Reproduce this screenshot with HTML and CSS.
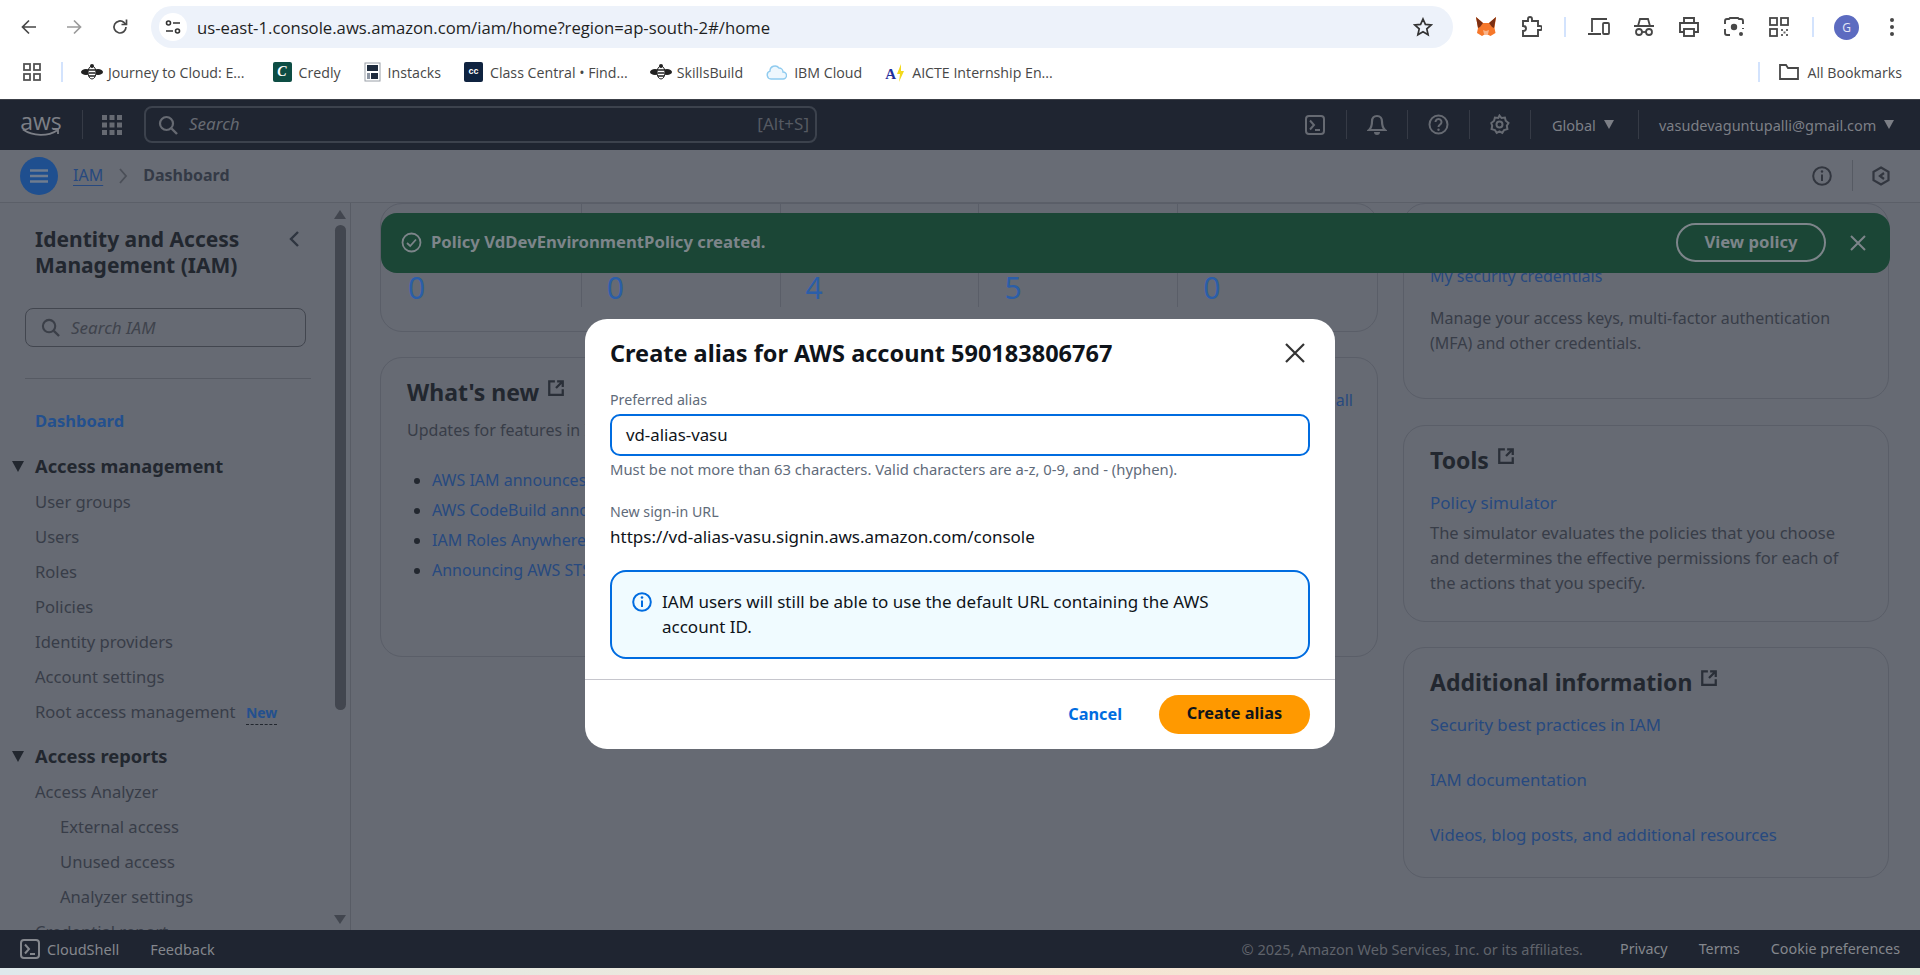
FILE: index.html
```html
<!DOCTYPE html>
<html lang="en">
<head>
    <meta charset="UTF-8">
    <meta name="viewport" content="width=device-width, initial-scale=1.0">
    <title>IAM Dashboard</title>
    <link rel="stylesheet" href="styles.css">
</head>
<body>

    <svg class="defs" width="0" height="0">
        <symbol id="ext" viewBox="0 0 16 16"><path d="M7 2H2v12h12V9M9 2h5v5M14 2L8 8" fill="none" stroke="currentColor" stroke-width="2"/></symbol>
        <symbol id="shell" viewBox="0 0 20 20"><rect x="1" y="1" width="18" height="18" rx="3" fill="none" stroke="currentColor" stroke-width="2"/><path d="M5 5.5l4 4.5-4 4.5M10 15h5" fill="none" stroke="currentColor" stroke-width="2"/></symbol>
        <symbol id="mag" viewBox="0 0 20 20"><circle cx="8.5" cy="8.5" r="6.5" fill="none" stroke="currentColor" stroke-width="2.2"/><path d="M13.5 13.5L19 19" stroke="currentColor" stroke-width="2.4"/></symbol>
        <symbol id="bee" viewBox="0 0 22 16"><ellipse cx="5" cy="8" rx="5" ry="3" fill="#222"/><ellipse cx="17" cy="8" rx="5" ry="3" fill="#222"/><ellipse cx="11" cy="8.5" rx="4" ry="6.5" fill="#fff" stroke="#222" stroke-width="1"/><path d="M7.5 6h7M7.5 9h7M8 12h6" stroke="#222" stroke-width="1.6"/><circle cx="11" cy="2" r="2" fill="#222"/></symbol>
    </svg>

    <!-- browser toolbar -->
    <div class="tool-row">
        <span class="tool-btn"><svg width="18" height="18" viewBox="0 0 18 18"><path d="M16 9H3M9 2.5L2.5 9 9 15.5" fill="none" stroke="#474747" stroke-width="1.7"/></svg></span>
        <span class="tool-btn"><svg width="18" height="18" viewBox="0 0 18 18"><path d="M2 9h13M9 2.5L15.5 9 9 15.5" fill="none" stroke="#9b9b9b" stroke-width="1.7"/></svg></span>
        <span class="tool-btn reload"><svg width="18" height="18" viewBox="0 0 18 18"><path d="M15 9a6 6 0 1 1-2-4.5L15 6.5M15.5 1.5v5h-5" fill="none" stroke="#474747" stroke-width="1.7"/></svg></span>
        <div class="url-pill">
            <span class="site-btn"><svg width="18" height="18" viewBox="0 0 18 18"><g fill="none" stroke="#333" stroke-width="1.6"><circle cx="4.5" cy="5" r="2"/><path d="M9 5h7M2 13h7"/><circle cx="13.5" cy="13" r="2"/></g></svg></span>
            <span class="url-text">us-east-1.console.aws.amazon.com/iam/home?region=ap-south-2#/home</span>
            <svg class="url-star" width="20" height="20" viewBox="0 0 20 20"><path d="M10 2l2.400 5.400 5.800.6-4.400 3.900 1.300 5.800L10 14.700l-5.100 3 1.300-5.800L1.800 8l5.800-.6z" fill="none" stroke="#333" stroke-width="1.700"/></svg>
        </div>
        <span class="tool-btn"><svg width="24" height="24" viewBox="0 0 24 24"><path d="M2 2l7 6h6l7-6-1.500 11 1 5-5 3-3-1.500h-3L8 21l-5-3 1-5z" fill="#f6772a"/><path d="M2 2l7 6-3 4-2 1zM22 2l-7 6 3 4 2 1z" fill="#7c2f12"/><path d="M9 15l3 1 3-1-1 4h-4z" fill="#f9b48a"/></svg></span>
        <span class="tool-btn"><svg width="22" height="24" viewBox="0 0 22 24"><path d="M3 6h5V4a2 2 0 0 1 4 0v2h6v5h2a2 2 0 0 1 0 4h-2v6H3v-5c2 0 3-1 3-2.500S5 11 3 11z" fill="none" stroke="#474747" stroke-width="1.900"/></svg></span>
        <span class="tool-sep"></span>
        <span class="tool-btn"><svg width="24" height="20" viewBox="0 0 24 20"><g fill="none" stroke="#474747" stroke-width="1.8"><path d="M5 15V2h15M1 17h13"/><rect x="16" y="6" width="6" height="11" rx="1"/></g></svg></span>
        <span class="tool-btn"><svg width="22" height="22" viewBox="0 0 22 22"><g fill="none" stroke="#474747" stroke-width="1.8"><path d="M1 10h20M5 10l2-7h8l2 7"/><circle cx="6" cy="16" r="3"/><circle cx="16" cy="16" r="3"/><path d="M9 16h4"/></g></svg></span>
        <span class="tool-btn"><svg width="22" height="22" viewBox="0 0 22 22"><g fill="none" stroke="#474747" stroke-width="1.9"><path d="M6 7V2h10v5M6 16H2V7h18v9h-4"/><rect x="6" y="13" width="10" height="7"/></g></svg></span>
        <span class="tool-btn"><svg width="22" height="22" viewBox="0 0 22 22"><g fill="none" stroke="#474747" stroke-width="1.9"><path d="M2 8V5a2 2 0 0 1 2-2h2l1-1h8l1 1h2a2 2 0 0 1 2 2v3M20 12v1M2 13v4a2 2 0 0 0 2 2h3"/></g><circle cx="11" cy="11" r="3.200" fill="#474747"/><circle cx="18" cy="18" r="2" fill="#474747"/></svg></span>
        <span class="tool-btn"><svg width="20" height="20" viewBox="0 0 20 20"><g fill="none" stroke="#474747" stroke-width="1.8"><rect x="1" y="1" width="7" height="7"/><rect x="12" y="1" width="7" height="7"/><rect x="1" y="12" width="7" height="7"/></g><path d="M12 12h2v2h-2zM17 12h2v2h-2zM14.500 14.500h2v2h-2zM12 17h2v2h-2zM17 17h2v2h-2z" fill="#666"/></svg></span>
        <span class="tool-sep"></span>
        <span class="tool-btn"><span class="avatar">G</span></span>
        <span class="tool-btn"><svg width="6" height="20" viewBox="0 0 6 20"><circle cx="3" cy="3" r="2" fill="#474747"/><circle cx="3" cy="10" r="2" fill="#474747"/><circle cx="3" cy="17" r="2" fill="#474747"/></svg></span>
    </div>

    <!-- bookmarks bar -->
    <div class="bm-row">
        <svg class="bm-apps" width="18" height="18" viewBox="0 0 18 18"><g fill="none" stroke="#555" stroke-width="1.800"><rect x="1" y="1" width="6" height="6"/><rect x="11" y="1" width="6" height="6"/><rect x="1" y="11" width="6" height="6"/><rect x="11" y="11" width="6" height="6"/></g></svg>
        <span class="bm-sep"></span>
        <span class="bm bm-bee"><svg width="22" height="16"><use href="#bee"/></svg>Journey to Cloud: E...</span>
        <span class="bm"><span class="ic-credly">C</span>Credly</span>
        <span class="bm"><svg width="17" height="20" viewBox="0 0 17 20"><rect x="1" y="1" width="15" height="18" fill="#fff" stroke="#9aa0a8"/><rect x="3" y="3" width="11" height="6" fill="#1d2a3c"/><rect x="7" y="11" width="7" height="6" fill="#1d2a3c"/><rect x="3" y="11" width="3" height="6" fill="#8d96a3"/></svg>Instacks</span>
        <span class="bm"><span class="ic-cc">cc</span>Class Central • Find...</span>
        <span class="bm bm-bee"><svg width="22" height="16"><use href="#bee"/></svg>SkillsBuild</span>
        <span class="bm"><svg width="21" height="18" viewBox="0 0 21 18"><path d="M5 16a4 4 0 0 1-1-7.800A5 5 0 0 1 13 5a4 4 0 0 1 4 4 3.500 3.500 0 0 1 0 7z" fill="#eef7fd" stroke="#8fcbef" stroke-width="1.400"/></svg>IBM Cloud</span>
        <span class="bm"><span class="ic-aicte">A<svg width="8" height="18" viewBox="0 0 8 18"><path d="M5 0L1 10h3l-1 8 5-11H5z" fill="#f3d91c"/></svg></span>AICTE Internship En...</span>
        <span class="bm-end">
            <span class="bm-sep"></span>
            <span class="bm"><svg width="22" height="18" viewBox="0 0 22 18"><path d="M2 16V2h6l2 3h10v11z" fill="none" stroke="#474747" stroke-width="1.800"/></svg>All Bookmarks</span>
        </span>
    </div>

    <!-- console top bar -->
    <header class="top-bar">
        <div class="aws-logo">
            <span>aws</span>
            <svg width="38" height="9" viewBox="0 0 38 9"><path d="M1 1.500c10 7 25 7 34 1M31 1h5v5" fill="none" stroke="#7c7f86" stroke-width="1.800"/></svg>
        </div>
        <span class="top-sep"></span>
        <svg class="top-grid" width="20" height="20" viewBox="0 0 20 20"><path d="M0 0h5v5H0zM7.500 0h5v5h-5zM15 0h5v5h-5zM0 7.500h5v5H0zM7.500 7.500h5v5h-5zM15 7.500h5v5h-5zM0 15h5v5H0zM7.500 15h5v5h-5zM15 15h5v5h-5z" fill="#666a72"/></svg>
        <div class="top-search">
            <svg width="20" height="20"><use href="#mag"/></svg>
            <span class="top-search-text">Search</span>
            <span class="top-search-key">[Alt+S]</span>
        </div>
        <div class="top-right">
            <span class="top-seg"><svg width="20" height="20"><use href="#shell"/></svg></span>
            <span class="top-seg"><svg width="20" height="24" viewBox="0 0 20 24"><path d="M10 3c-3.500 0-5 2.500-5 5.500 0 4-.8 6.500-3 8.500h16c-2.200-2-3-4.500-3-8.500C15 5.500 13.500 3 10 3z" fill="none" stroke="currentColor" stroke-width="2.200"/><path d="M7 19a3 3 0 0 0 6 0z" fill="currentColor"/></svg></span>
            <span class="top-seg"><svg width="21" height="21" viewBox="0 0 21 21"><circle cx="10.500" cy="10.500" r="9" fill="none" stroke="currentColor" stroke-width="2"/><path d="M7.500 8a3 3 0 1 1 4.500 2.600c-1 .6-1.500 1.200-1.500 2.400" fill="none" stroke="currentColor" stroke-width="2"/><circle cx="10.500" cy="15.800" r="1.200" fill="currentColor"/></svg></span>
            <span class="top-seg"><svg width="21" height="21" viewBox="0 0 21 21"><path d="M10.500 1.500l2 2.500 3.400-.4.800 3.200 2.800 2.200-1.700 2.800.6 3.300-3.300.9-1.800 2.900-2.800-1.600-2.800 1.600-1.800-2.900-3.300-.9.6-3.300L2.300 9l2.800-2.200.8-3.200 3.400.4z" fill="none" stroke="currentColor" stroke-width="2"/><circle cx="10.500" cy="10.500" r="3" fill="none" stroke="currentColor" stroke-width="2"/></svg></span>
            <span class="top-seg top-global">Global<i class="tri"></i></span>
            <span class="top-seg top-user">vasudevaguntupalli@gmail.com<i class="tri"></i></span>
        </div>
    </header>

    <!-- breadcrumb bar -->
    <div class="crumb-bar">
        <span class="menu-btn"><svg width="18" height="14" viewBox="0 0 18 14"><path d="M0 1.500h18M0 7h18M0 12.500h18" stroke="#6f7c8f" stroke-width="2.400"/></svg></span>
        <a class="crumb-link">IAM</a>
        <svg class="crumb-chev" width="10" height="16" viewBox="0 0 10 16"><path d="M2 1l6 7-6 7" fill="none" stroke="#4b4f58" stroke-width="1.800"/></svg>
        <span class="crumb-now">Dashboard</span>
        <div class="crumb-right">
            <svg width="20" height="20" viewBox="0 0 20 20"><circle cx="10" cy="10" r="8.800" fill="none" stroke="#32363f" stroke-width="2"/><path d="M10 8.500V15" stroke="#32363f" stroke-width="2"/><circle cx="10" cy="5.500" r="1.200" fill="#32363f"/></svg>
            <span class="crumb-sep"></span>
            <svg width="20" height="20" viewBox="0 0 20 20"><path d="M10 1.500l7.500 4.300v8.400L10 18.500l-7.500-4.300V5.800z" fill="none" stroke="#32363f" stroke-width="2.200"/><path d="M13 7l-4 3 4 3" fill="none" stroke="#32363f" stroke-width="2.200"/></svg>
        </div>
    </div>

    <div class="main">
        <aside class="side">
            <div class="side-head">
                <h2>Identity and Access Management (IAM)</h2>
                <svg width="12" height="18" viewBox="0 0 12 18"><path d="M10 2L3 9l7 7" fill="none" stroke="#2f3540" stroke-width="2.400"/></svg>
            </div>
            <div class="side-search">
                <svg width="19" height="19"><use href="#mag"/></svg>
                <span>Search IAM</span>
            </div>
            <div class="side-rule"></div>
            <a class="side-item side-active">Dashboard</a>
            <div class="side-group"><i class="group-tri"></i>Access management</div>
            <a class="side-item">User groups</a>
            <a class="side-item">Users</a>
            <a class="side-item">Roles</a>
            <a class="side-item">Policies</a>
            <a class="side-item">Identity providers</a>
            <a class="side-item">Account settings</a>
            <a class="side-item">Root access management <span class="side-new">New</span></a>
            <div class="side-group side-group-2"><i class="group-tri"></i>Access reports</div>
            <a class="side-item">Access Analyzer</a>
            <a class="side-item side-sub">External access</a>
            <a class="side-item side-sub">Unused access</a>
            <a class="side-item side-sub">Analyzer settings</a>
            <a class="side-item">Credential report</a>
            <div class="side-scroll">
                <i class="scroll-up"></i>
                <i class="scroll-thumb"></i>
                <i class="scroll-down"></i>
            </div>
        </aside>

        <main class="content">
            <div class="col-left">
                <section class="card card-res">
                    <div class="res-row">
                        <div class="res-cell"><a>0</a></div>
                        <div class="res-cell"><a>0</a></div>
                        <div class="res-cell"><a>4</a></div>
                        <div class="res-cell"><a>5</a></div>
                        <div class="res-cell"><a>0</a></div>
                    </div>
                </section>
                <section class="card card-new">
                    <div class="new-head">
                        <h3>What's new <svg class="ext" width="18" height="18"><use href="#ext"/></svg></h3>
                        <a>View all</a>
                    </div>
                    <p class="new-sub">Updates for features in IAM</p>
                    <ul class="new-list">
                        <li><a>AWS IAM announces support for new features</a></li>
                        <li><a>AWS CodeBuild announces new capabilities</a></li>
                        <li><a>IAM Roles Anywhere now supports more options</a></li>
                        <li><a>Announcing AWS STS support for new regions</a></li>
                    </ul>
                </section>
            </div>
            <div class="col-right">
                <section class="card card-links">
                    <a class="cred-link">My security credentials</a>
                    <p>Manage your access keys, multi-factor authentication (MFA) and other credentials.</p>
                </section>
                <section class="card card-tools">
                    <h3>Tools <svg class="ext" width="18" height="18"><use href="#ext"/></svg></h3>
                    <a class="tools-link">Policy simulator</a>
                    <p>The simulator evaluates the policies that you choose and determines the effective permissions for each of the actions that you specify.</p>
                </section>
                <section class="card card-info">
                    <h3>Additional information <svg class="ext" width="18" height="18"><use href="#ext"/></svg></h3>
                    <a>Security best practices in IAM</a>
                    <a>IAM documentation</a>
                    <a>Videos, blog posts, and additional resources</a>
                </section>
            </div>
        </main>

        <!-- flash message sits over the page content -->
        <div class="flash">
            <svg width="21" height="21" viewBox="0 0 21 21"><circle cx="10.500" cy="10.500" r="9" fill="none" stroke="#7d858a" stroke-width="1.800"/><path d="M6 11l3.200 3L15 7.500" fill="none" stroke="#7d858a" stroke-width="1.800"/></svg>
            <span class="flash-text">Policy VdDevEnvironmentPolicy created.</span>
            <span class="flash-btn">View policy</span>
            <svg class="flash-x" width="16" height="16" viewBox="0 0 16 16"><path d="M1 1l14 14M15 1L1 15" stroke="#7d858a" stroke-width="2"/></svg>
        </div>
    </div>

    <footer class="foot">
        <svg width="20" height="20"><use href="#shell"/></svg>
        <span class="foot-shell">CloudShell</span>
        <span class="foot-fb">Feedback</span>
        <div class="foot-right">
            <span class="foot-copy">© 2025, Amazon Web Services, Inc. or its affiliates.</span>
            <span>Privacy</span>
            <span>Terms</span>
            <span>Cookie preferences</span>
        </div>
    </footer>
    <div class="desk-strip"></div>

    <!-- modal -->
    <div class="modal">
        <div class="modal-body">
            <div class="modal-head">
                <h2>Create alias for AWS account 590183806767</h2>
                <svg width="22" height="22" viewBox="0 0 22 22"><path d="M2 2l18 18M20 2L2 20" stroke="#333" stroke-width="2.200"/></svg>
            </div>
            <label class="field-label">Preferred alias</label>
            <div class="field-input">vd-alias-vasu</div>
            <div class="field-help">Must be not more than 63 characters. Valid characters are a-z, 0-9, and - (hyphen).</div>
            <div class="field-label url-label">New sign-in URL</div>
            <div class="url-value">https://vd-alias-vasu.signin.aws.amazon.com/console</div>
            <div class="info-box">
                <svg width="20" height="20" viewBox="0 0 20 20"><circle cx="10" cy="10" r="8.800" fill="none" stroke="#006ce0" stroke-width="2"/><path d="M10 8.500V15" stroke="#006ce0" stroke-width="2"/><circle cx="10" cy="5.500" r="1.300" fill="#006ce0"/></svg>
                <span>IAM users will still be able to use the default URL containing the AWS account ID.</span>
            </div>
        </div>
        <div class="modal-foot">
            <a class="btn-cancel">Cancel</a>
            <a class="btn-create">Create alias</a>
        </div>
    </div>

</body>
</html>
```

FILE: styles.css
```css
* {
    box-sizing: border-box;
}
html, body {
    margin: 0;
    height: 975px;
    overflow: hidden;
}
body {
    position: relative;
    display: flex;
    flex-direction: column;
    font-family: "Noto Sans", "Liberation Sans", sans-serif;
    font-size: 16px;
    background: #fff;
    color: #2f3540;
}
a {
    color: #27497f;
}
h2, h3, p, ul {
    margin: 0;
}
.defs {
    position: absolute;
}

/* browser chrome */
.tool-row {
    height: 50px;
    display: flex;
    align-items: flex-start;
    padding: 6px 6px 0;
    flex: none;
}
.tool-btn {
    width: 45px;
    height: 42px;
    display: flex;
    align-items: center;
    justify-content: center;
    flex: none;
}
.reload {
    width: 46px;
    padding-left: 2px;
}
.tool-sep {
    width: 23px;
    height: 42px;
    flex: none;
    position: relative;
}
.tool-sep::after, .bm-sep::after {
    content: "";
    display: block;
    width: 2px;
    height: 20px;
    background: #d3e3fd;
    margin: 11px auto 0;
}
.url-pill {
    flex: 1;
    height: 42px;
    margin: 0 10px 0 9px;
    border-radius: 21px;
    background: #edf2fa;
    display: flex;
    align-items: center;
    padding: 0 20px 0 8px;
}
.site-btn {
    width: 28px;
    height: 28px;
    border-radius: 50%;
    background: #fff;
    display: flex;
    align-items: center;
    justify-content: center;
}
.url-text {
    font-family: "Open Sans", sans-serif;
    font-size: 16.700px;
    color: #1f1f1f;
    margin-left: 10px;
    flex: 1;
}
.avatar {
    width: 25px;
    height: 25px;
    border-radius: 50%;
    background: #5c6bc0;
    color: #e6e8f6;
    font: 12px "Open Sans", sans-serif;
    display: flex;
    align-items: center;
    justify-content: center;
}
.bm-row {
    height: 49px;
    padding: 0 18px 5px 23px;
    display: flex;
    align-items: center;
    flex: none;
    font-family: "Open Sans", sans-serif;
    font-size: 14.200px;
    color: #474747;
    gap: 23px;
}
.bm {
    display: flex;
    align-items: center;
    gap: 7px;
    white-space: nowrap;
}
.bm-bee {
    gap: 5px;
    margin-left: -1px;
}
.bm-sep {
    width: 2px;
    height: 20px;
    margin-left: -3px;
    margin-right: -4px;
}
.bm-sep::after {
    margin: 0;
}
.bm-end {
    margin-left: auto;
    display: flex;
    align-items: center;
    gap: 22px;
}
.ic-credly {
    width: 19px;
    height: 20px;
    margin-left: 5px;
    border-radius: 2px;
    background: #0d4d44;
    color: #fff;
    font: italic 700 14px "Liberation Serif", serif;
    text-align: center;
    line-height: 20px;
}
.ic-cc {
    width: 19px;
    height: 20px;
    border-radius: 2px;
    background: #0f2340;
    color: #fff;
    font: 700 9px/19px "Liberation Sans", sans-serif;
    text-align: center;
}
.ic-aicte {
    width: 20px;
    height: 20px;
    display: flex;
    align-items: flex-end;
    color: #1f2f9c;
    font: 700 15px/15px "Liberation Serif", serif;
}

/* console header */
.top-bar {
    height: 51px;
    background: #1f2531;
    border-top: 1px solid #3c4048;
    flex: none;
    display: flex;
    align-items: center;
    padding: 0 0 1px 22px;
    color: #7c7f86;
}
.aws-logo {
    width: 38px;
    display: flex;
    flex-direction: column;
    align-items: center;
    font: 23px/16px "Open Sans", sans-serif;
    color: #7c7f86;
}
.aws-logo svg {
    display: block;
    margin-top: -1px;
}
.top-sep {
    width: 1px;
    height: 29px;
    background: #363b46;
    margin: 0 19px 0 22px;
}
.top-search {
    width: 673px;
    height: 37px;
    margin-left: 22px;
    border: 2px solid #3c424d;
    border-radius: 8px;
    display: flex;
    align-items: center;
    padding: 0 6px 0 12px;
    color: #666a72;
}
.top-search-text {
    font-size: 17px;
    font-style: italic;
    margin: 0 0 2px 11px;
}
.top-search-key {
    margin: 0 0 2px auto;
    font-size: 17px;
    color: #565a62;
}
.top-grid {
    flex: none;
}
.top-right {
    margin-left: auto;
    display: flex;
    align-items: center;
    font-size: 14.500px;
}
.top-seg {
    width: 61.500px;
    height: 29px;
    border-left: 1px solid #363b46;
    display: flex;
    align-items: center;
    justify-content: center;
    color: #666a72;
}
.top-seg:first-child {
    border-left: 0;
}
.top-global, .top-user {
    color: #7c7f86;
    justify-content: flex-start;
}
.top-global {
    width: 108px;
    padding-left: 21px;
}
.top-user {
    width: 282px;
    padding-left: 20px;
}
.tri {
    width: 0;
    height: 0;
    margin-left: 8px;
    border: 5.500px solid transparent;
    border-top: 9px solid #7c7f86;
    border-bottom: 0;
}

/* breadcrumbs */
.crumb-bar {
    height: 53px;
    flex: none;
    background: #686c75;
    border-bottom: 1px solid #5b5f68;
    display: flex;
    align-items: center;
    padding: 0 0 1px 20px;
}
.menu-btn {
    width: 38px;
    height: 38px;
    border-radius: 50%;
    background: #1f4f8f;
    display: flex;
    align-items: center;
    justify-content: center;
}
.crumb-link {
    margin: 0 0 2px 15px;
    text-decoration: underline;
    text-underline-offset: 4px;
}
.crumb-chev {
    margin: 0 15px;
}
.crumb-now {
    margin-bottom: 2px;
    font-weight: 700;
    color: #343a46;
}
.crumb-right {
    margin-left: auto;
    display: flex;
    align-items: center;
    padding-right: 29px;
}
.crumb-sep {
    width: 1px;
    height: 31px;
    background: #565a63;
    margin: 0 18px 0 20px;
}

/* main area */
.main {
    position: relative;
    flex: 1;
    min-height: 0;
    display: flex;
    background: #666a73;
    overflow: hidden;
}
.side {
    position: relative;
    width: 351px;
    flex: none;
    border-right: 1px solid #585c65;
    padding: 23px 0 0 35px;
    overflow: hidden;
    font-size: 16.600px;
}
.side-head {
    display: flex;
    align-items: flex-start;
    width: 271px;
}
.side-head h2 {
    font-size: 21px;
    font-weight: 700;
    line-height: 26px;
    color: #22272f;
    width: 253px;
}
.side-head svg {
    margin: 4px 0 0 0;
    flex: none;
}
.side-search {
    width: 281px;
    height: 39px;
    margin: 30px 0 0 -10px;
    border: 1px solid #42464f;
    border-radius: 8px;
    display: flex;
    align-items: center;
    padding-left: 15px;
    color: #3b3f48;
}
.side-search span {
    font-size: 17px;
    font-style: italic;
    margin-left: 11px;
    color: #3f434c;
}
.side-rule {
    width: 286px;
    height: 1px;
    margin: 31px 0 24px -10px;
    background: #565a63;
}
.side-item {
    display: block;
    height: 35px;
    line-height: 35px;
    color: #383d48;
    white-space: nowrap;
}
.side-active {
    font-size: 16.500px;
    font-weight: 700;
    color: #23508e;
}
.side-sub {
    padding-left: 25px;
}
.side-group {
    position: relative;
    height: 35px;
    margin-top: 11px;
    font-size: 18.300px;
    font-weight: 700;
    line-height: 33px;
    color: #22272f;
}
.side-group-2 {
    margin-top: 10px;
}
.group-tri {
    position: absolute;
    left: -23px;
    top: 12px;
    border: 6.500px solid transparent;
    border-top: 11px solid #22272f;
    border-bottom: 0;
}
.side-new {
    margin-left: 6px;
    font-size: 14px;
    font-weight: 700;
    color: #23508e;
    border-bottom: 1px dashed #22272f;
    padding-bottom: 2px;
}
.side-scroll {
    position: absolute;
    right: 4px;
    top: 6px;
    bottom: 6px;
    width: 11px;
}
.scroll-up, .scroll-down {
    position: absolute;
    left: -1px;
    border: 6.500px solid transparent;
}
.scroll-up {
    top: 1px;
    border-bottom: 9px solid #42464f;
    border-top: 0;
}
.scroll-down {
    bottom: 0;
    border-top: 9px solid #42464f;
    border-bottom: 0;
}
.scroll-thumb {
    position: absolute;
    left: 0;
    top: 16px;
    width: 11px;
    height: 485px;
    border-radius: 6px;
    background: #42464f;
}

/* content cards */
.content {
    flex: 1;
    display: flex;
    gap: 25px;
    padding-left: 29px;
}
.col-left {
    width: 998px;
    flex: none;
}
.col-right {
    width: 486px;
    flex: none;
}
.card {
    border: 1px solid #5a5e68;
    border-radius: 22px;
    padding: 0 26px;
    overflow: hidden;
}
.card h3 {
    font-size: 23px;
    font-weight: 700;
    color: #22272f;
    line-height: 30px;
}
.ext {
    color: #2a2f38;
    vertical-align: 4px;
    margin-left: 2px;
}
.card p {
    line-height: 25px;
    color: #383d48;
}
.card-res {
    height: 129px;
    margin-top: 0;
    padding: 0;
}
.res-row {
    display: flex;
    height: 103px;
    padding: 65px 0 0 2px;
}
.res-cell {
    width: 199px;
    border-right: 1px solid #5a5e68;
    padding-left: 25px;
    margin-top: -65px;
    padding-top: 65px;
    font-size: 30px;
    line-height: 38px;
}
.res-cell:last-child {
    border-right: 0;
}
.res-cell a {
    color: #2b5ea8;
}
.card-new {
    height: 300px;
    margin-top: 25px;
    padding-top: 19px;
}
.new-head {
    display: flex;
    height: 30px;
    justify-content: space-between;
    align-items: flex-start;
    margin-right: -2px;
}
.new-head a {
    padding-top: 12px;
}
.new-sub {
    margin-top: 11px;
}
.card-new .new-sub {
    line-height: 25px;
    color: #383d48;
}
.new-list {
    margin-top: 22px;
    padding-left: 25px;
}
.new-list li {
    height: 30px;
    line-height: 30px;
    color: #22272f;
}
.card-links {
    height: 196px;
    padding-top: 60px;
}
.cred-link {
    display: block;
    line-height: 25px;
}
.card-links p {
    margin-top: 17px;
}
.card-tools {
    height: 197px;
    margin-top: 26px;
    padding-top: 19px;
}
.tools-link {
    display: block;
    margin-top: 15px;
    font-size: 17px;
    line-height: 25px;
}
.tools-link + p {
    margin-top: 5px;
    font-size: 16.500px;
    padding-right: 6px;
}
.card-info {
    height: 231px;
    margin-top: 25px;
    padding-top: 19px;
}
.card-info a {
    display: block;
    margin-top: 30px;
    font-size: 16.800px;
    line-height: 25px;
}
.card-info h3 + a {
    margin-top: 15px;
}

/* flash bar */
.flash {
    position: absolute;
    left: 381px;
    top: 10px;
    width: 1509px;
    height: 60px;
    border-radius: 16px;
    background: #1b4636;
    display: flex;
    align-items: center;
    padding: 0 24px 1px 20px;
    color: #7d858a;
    font-size: 16.700px;
    font-weight: 700;
}
.flash-text {
    margin: 0 0 2px 9px;
}
.flash-btn {
    margin-left: auto;
    width: 150px;
    height: 39px;
    border: 2px solid #7d858a;
    border-radius: 20px;
    text-align: center;
    line-height: 33px;
}
.flash-x {
    margin-left: 24px;
}

/* footer */
.foot {
    height: 38px;
    flex: none;
    background: #1f2531;
    display: flex;
    align-items: center;
    padding: 0 20px;
    font-size: 14.500px;
    color: #84878d;
}
.foot-shell {
    margin-left: 7px;
}
.foot-fb {
    margin-left: 31px;
}
.foot-right {
    margin-left: auto;
    display: flex;
    gap: 31px;
    font-size: 14.300px;
}
.foot-copy {
    font-size: 14.500px;
    color: #5f636b;
    margin-right: 6px;
}
.desk-strip {
    height: 7px;
    flex: none;
    background: linear-gradient(90deg, #dfe9ec 0%, #e6e9e2 25%, #f4e7d6 50%, #f5e3d2 75%, #dde8d8 100%);
}

/* modal */
.modal {
    position: absolute;
    left: 585px;
    top: 319px;
    width: 750px;
    height: 430px;
    border-radius: 22px;
    background: #fff;
    color: #0f141a;
    overflow: hidden;
    font-size: 17px;
}
.modal-body {
    height: 361px;
    padding: 17px 25px 0;
    border-bottom: 1px solid #c6c6cd;
}
.modal-head {
    display: flex;
    justify-content: space-between;
    align-items: center;
    height: 34px;
    padding-right: 4px;
}
.modal-head h2 {
    font-size: 23.500px;
    font-weight: 700;
}
.field-label {
    margin-top: 20px;
    font-size: 14.200px;
    line-height: 20px;
    color: #5f6b7a;
    display: block;
}
.field-input {
    height: 42px;
    margin-top: 4px;
    border: 2px solid #006ce0;
    border-radius: 10px;
    padding-left: 14px;
    line-height: 38px;
    font-size: 16.800px;
}
.field-help {
    margin-top: 3px;
    font-size: 14.800px;
    line-height: 20px;
    color: #5f6b7a;
}
.url-label {
    margin-top: 23px;
}
.url-value {
    margin-top: 2px;
    line-height: 25px;
}
.info-box {
    margin-top: 21px;
    height: 89px;
    border: 2px solid #006ce0;
    border-radius: 16px;
    background: #f0fbff;
    display: flex;
    align-items: flex-start;
    padding: 17px 70px 0 20px;
    line-height: 25px;
}
.info-box svg {
    flex: none;
    margin: 3px 10px 0 0;
}
.modal-foot {
    display: flex;
    align-items: center;
    justify-content: flex-end;
    height: 69px;
    padding-right: 25px;
    font-size: 16.300px;
}
.btn-cancel {
    font-weight: 700;
    color: #006ce0;
    margin: -2px 37px 0 0;
}
.btn-create {
    width: 151px;
    height: 39px;
    border-radius: 20px;
    background: #ff9900;
    color: #0f141a;
    font-weight: 700;
    text-align: center;
    line-height: 37px;
}
```
